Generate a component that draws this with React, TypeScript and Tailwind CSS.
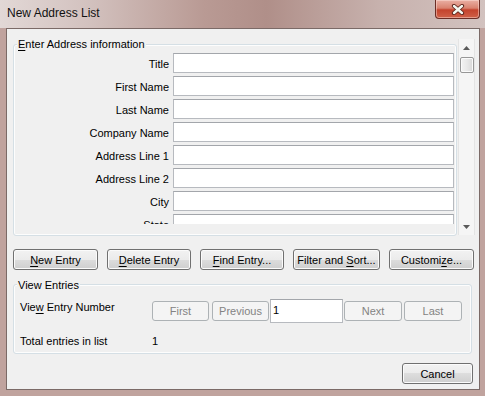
import type { ReactNode } from "react";

const font = "font-['Liberation_Sans',Arial,sans-serif]";

function Btn({ children, className = "", disabled = false }: { children: ReactNode; className?: string; disabled?: boolean }) {
  return (
    <div
      className={
        "flex items-center justify-center rounded-[3px] border text-[11px] leading-[14px] " +
        (disabled
          ? "border-[#adb2b5] bg-[#f4f4f4] text-[#838383] "
          : "border-[#707070] bg-[linear-gradient(180deg,#f2f2f2_0%,#ebebeb_50%,#dddddd_50%,#cfcfcf_100%)] text-black shadow-[inset_0_0_0_1px_#fbfbfb] ") +
        className
      }
    >
      <span className="whitespace-pre">{children}</span>
    </div>
  );
}

function U({ children }: { children: ReactNode }) {
  return <span className="underline underline-offset-[2px]">{children}</span>;
}

function Arrow({ down = false }: { down?: boolean }) {
  return (
    <svg width="7" height="4" viewBox="0 0 7 4">
      <path d={down ? "M0 0 L3.5 4 L7 0 Z" : "M0 4 L3.5 0 L7 4 Z"} fill="#5a5a5a" />
    </svg>
  );
}

const fields = ["Title", "First Name", "Last Name", "Company Name", "Address Line 1", "Address Line 2", "City", "State", "ZIP Code"];

export default function App() {
  return (
    <div className={`${font} flex h-[396px] w-[485px] flex-col bg-[#c0a39e] text-black`}>
      {/* title bar */}
      <div className="flex h-[28px] items-start justify-between bg-[linear-gradient(90deg,#e2d8d6_0%,#d3c2bf_18%,#b99a94_42%,#b08f89_55%,#c7b1ad_78%,#d2c2bf_100%)]">
        <div className="pl-[7px] pt-[6px] text-[12px] leading-[15px] text-[#111]">New Address List</div>
        <div className="mr-[5px] flex h-[19px] w-[45px] items-center justify-center rounded-b-[4px] border border-t-0 border-[#6b2d25] bg-[linear-gradient(180deg,#eab0a4_0%,#d9826f_45%,#c4432d_55%,#cf6148_100%)] shadow-[inset_0_0_0_1px_rgba(255,230,225,0.45)]">
          <svg width="14" height="11" viewBox="0 0 14 11">
            <path d="M3 2 L11 9 M11 2 L3 9" stroke="#5a2219" strokeWidth="4.2" strokeLinecap="round" />
            <path d="M3 2 L11 9 M11 2 L3 9" stroke="#f4f8f0" strokeWidth="2.4" strokeLinecap="round" />
          </svg>
        </div>
      </div>

      {/* client area */}
      <div className="ml-[6px] h-[362px] w-[474px] border border-[#7b6a67] bg-[#f0f0f0]">
        {/* address entry panel */}
        <div className="flex items-start pl-[6px] pt-[10px]">
          <div className="relative mt-[5px] h-[192px] w-[444px] rounded-[3px] border border-[#d5dfe5] pb-[11px] pt-[8px] shadow-[inset_0_0_0_1px_#fdfdfd]">
            <div className="absolute left-[3px] top-[-8px] bg-[#f0f0f0] px-[1px] text-[11px] leading-[14px]">
              <U>E</U>nter Address information
            </div>
            <div className="flex h-[171px] flex-col gap-[3px] overflow-hidden">
              {fields.map((f) => (
                <div key={f} className="flex h-[20px] shrink-0 items-center">
                  <div className="w-[155px] pt-[1px] text-right text-[11px] leading-[14px]">{f}</div>
                  <div className="ml-[4px] h-[20px] w-[281px] border border-[#b7babf] border-t-[#a3a6ab] bg-white" />
                </div>
              ))}
            </div>
          </div>
          <div className="ml-[1px] flex h-[196px] w-[17px] flex-col border-x border-[#e4e4e4] bg-[#f5f5f5]">
            <div className="flex h-[17px] items-center justify-center">
              <Arrow />
            </div>
            <div className="ml-[1px] mt-[1px] h-[16px] w-[14px] rounded-[2px] border border-[#979797] bg-[linear-gradient(90deg,#f3f3f3_0%,#e8e8e8_50%,#d8d8d8_100%)] shadow-[inset_0_0_0_1px_#fafafa]" />
            <div className="flex-1" />
            <div className="flex h-[17px] items-center justify-center">
              <Arrow down />
            </div>
          </div>
        </div>

        {/* action buttons */}
        <div className="mt-[13px] flex gap-[9px] pl-[6px]">
          <Btn className="h-[21px] w-[85px]">
            <U>N</U>ew Entry
          </Btn>
          <Btn className="h-[21px] w-[84px]">
            <U>D</U>elete Entry
          </Btn>
          <Btn className="h-[21px] w-[84px]">
            <U>F</U>ind Entry...
          </Btn>
          <Btn className="h-[21px] w-[87px]">
            {"Filter and "}
            <U>S</U>ort...
          </Btn>
          <Btn className="h-[21px] w-[85px]">
            Customi<U>z</U>e...
          </Btn>
        </div>

        {/* view entries */}
        <div className="pl-[6px]">
          <div className="relative mt-[14px] h-[70px] w-[459px] rounded-[3px] border border-[#d5dfe5] pl-[6px] pt-[14px] shadow-[inset_0_0_0_1px_#fdfdfd]">
            <div className="absolute left-[3px] top-[-7px] bg-[#f0f0f0] px-[1px] text-[11px] leading-[14px]">View Entries</div>
            <div className="flex items-start">
              <div className="mt-[1px] w-[132px] text-[11px] leading-[14px]">
                Vie<U>w</U> Entry Number
              </div>
              <Btn disabled className="mt-[2px] h-[20px] w-[57px]">First</Btn>
              <Btn disabled className="ml-[3px] mt-[2px] h-[20px] w-[57px]">Previous</Btn>
              <div className="ml-[1px] h-[24px] w-[73px] border border-[#b7babf] border-t-[#a3a6ab] bg-white pl-[2px] pt-[3px] text-[11px] leading-[14px]">
                1
              </div>
              <Btn disabled className="ml-[1px] mt-[2px] h-[20px] w-[58px]">Next</Btn>
              <Btn disabled className="ml-[2px] mt-[2px] h-[20px] w-[58px]">Last</Btn>
            </div>
            <div className="mt-[11px] flex text-[11px] leading-[14px]">
              <div className="w-[132px]">Total entries in list</div>
              <div>1</div>
            </div>
          </div>
        </div>

        {/* dialog button */}
        <div className="mt-[9px] flex justify-end pr-[6px]">
          <Btn className="h-[21px] w-[71px]">Cancel</Btn>
        </div>
      </div>
    </div>
  );
}
